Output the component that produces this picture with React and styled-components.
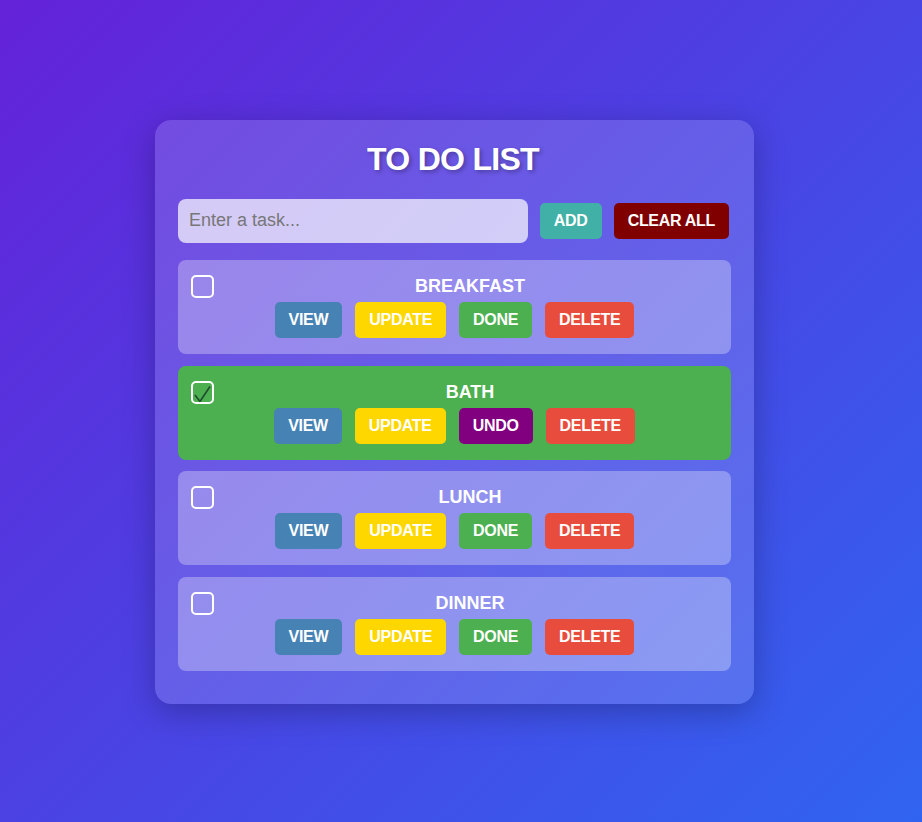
import React from "react";
import styled, { createGlobalStyle } from "styled-components";

const Global = createGlobalStyle`
  html, body { margin: 0; padding: 0; }
  body {
    font-family: "Liberation Sans", Arial, sans-serif;
    background: linear-gradient(135deg, #6422d8 0%, #3064f0 100%);
    min-height: 100vh;
  }
`;

const Page = styled.div`
  min-height: 100vh;
  display: flex;
  align-items: center;
  justify-content: center;
  padding-right: 13px;
  padding-top: 2px;
  box-sizing: border-box;
`;

const Card = styled.div`
  width: 599px;
  box-sizing: border-box;
  padding: 21px 23px 33px;
  background: rgba(255, 255, 255, 0.15);
  border-radius: 16px;
  box-shadow: 0 8px 32px rgba(0, 0, 0, 0.25);
`;

const Title = styled.h1`
  margin: 0 0 21px;
  padding-right: 3px;
  text-align: center;
  color: #fff;
  font-size: 32px;
  letter-spacing: -0.7px;
  font-weight: bold;
  text-shadow: 2px 2px 4px rgba(0, 0, 0, 0.3);
`;

const InputRow = styled.div`
  display: flex;
  align-items: center;
  gap: 12px;
  padding-right: 2px;
  margin-bottom: 17px;
`;

const TaskInput = styled.input`
  flex: 1;
  height: 44px;
  box-sizing: border-box;
  border: none;
  outline: none;
  border-radius: 8px;
  padding: 0 11px;
  font-family: "Liberation Sans", Arial, sans-serif;
  font-size: 18px;
  background: rgba(255, 255, 255, 0.7);
  color: #333;
  &::placeholder { color: #777; }
`;

const Btn = styled.button`
  border: none;
  border-radius: 5px;
  padding: 8px 14px;
  height: 36px;
  box-sizing: border-box;
  font-family: "Liberation Sans", Arial, sans-serif;
  font-size: 16px;
  line-height: 20px;
  letter-spacing: -0.3px;
  font-weight: bold;
  color: #fff;
  background: ${(p) => p.$bg};
  cursor: pointer;
  white-space: nowrap;
`;

const List = styled.div`
  display: flex;
  flex-direction: column;
  gap: 11.8px;
`;

const Item = styled.div`
  padding: 15px 13px 16px;
  border-radius: 8px;
  background: ${(p) => (p.$done ? "#4caf50" : "rgba(255, 255, 255, 0.3)")};
  display: flex;
  flex-direction: column;
  gap: 4px;
`;

const Header = styled.div`
  display: flex;
  align-items: center;
  gap: 8px;
  height: 23px;
`;

const Check = styled.span`
  width: 23px;
  height: 23px;
  box-sizing: border-box;
  border: 2px solid #fff;
  border-radius: 5px;
  display: flex;
  align-items: center;
  justify-content: center;
  flex-shrink: 0;
`;

const Name = styled.span`
  flex: 1;
  text-align: center;
  color: #fff;
  font-size: 18px;
  font-weight: bold;
`;

const Actions = styled.div`
  display: flex;
  justify-content: center;
  gap: 13px;
`;

const tasks = [
  { name: "BREAKFAST", done: false },
  { name: "BATH", done: true },
  { name: "LUNCH", done: false },
  { name: "DINNER", done: false },
];

export default function App() {
  return (
    <>
      <Global />
      <Page>
        <Card>
          <Title>TO DO LIST</Title>
          <InputRow>
            <TaskInput placeholder="Enter a task..." />
            <Btn $bg="#41b0a6">ADD</Btn>
            <Btn $bg="#800000">CLEAR ALL</Btn>
          </InputRow>
          <List>
            {tasks.map((t) => (
              <Item key={t.name} $done={t.done}>
                <Header>
                  <Check>
                    {t.done && (
                      <svg width="19" height="19" viewBox="0 0 19 19">
                        <polyline
                          points="2,12 7,18.5 17,3.5"
                          fill="none"
                          stroke="#1f4d2e"
                          strokeWidth="1.6"
                        />
                      </svg>
                    )}
                  </Check>
                  <Name>{t.name}</Name>
                </Header>
                <Actions>
                  <Btn $bg="#4682b4">VIEW</Btn>
                  <Btn $bg="#ffd700">UPDATE</Btn>
                  {t.done ? (
                    <Btn $bg="#800080">UNDO</Btn>
                  ) : (
                    <Btn $bg="#4caf50">DONE</Btn>
                  )}
                  <Btn $bg="#e74c3c">DELETE</Btn>
                </Actions>
              </Item>
            ))}
          </List>
        </Card>
      </Page>
    </>
  );
}
